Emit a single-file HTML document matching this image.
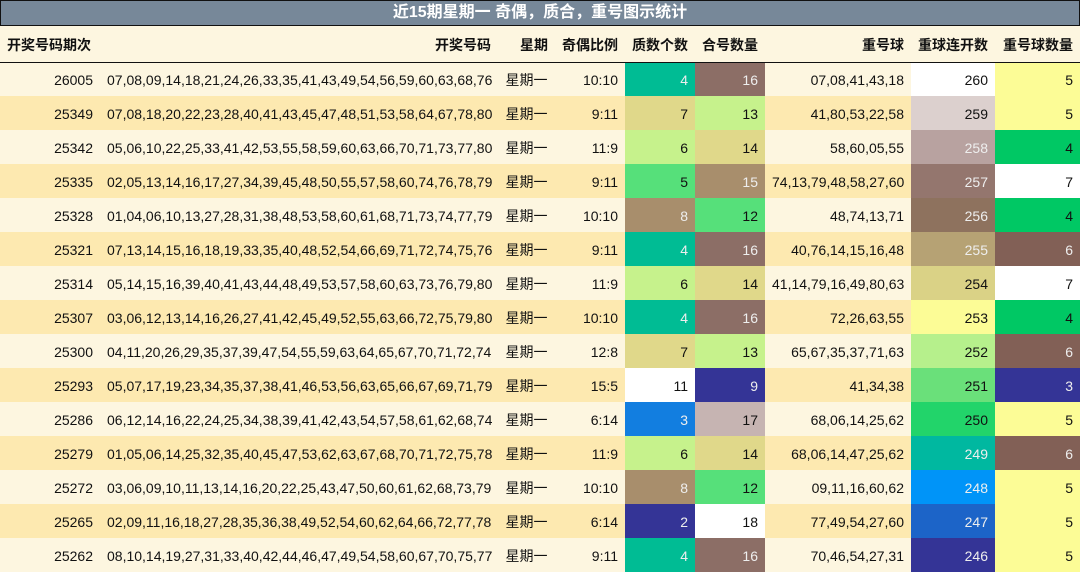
<!DOCTYPE html>
<html><head><meta charset="utf-8"><style>
*{margin:0;padding:0;box-sizing:border-box}
body{width:1080px;height:573px;overflow:hidden;background:#fff;font-family:"Liberation Sans","Noto Sans CJK SC",sans-serif;font-size:14px;color:#111}
.title{position:absolute;left:0;top:0;width:1080px;height:26px;background:#778899;border:1px solid #111;color:#fff;font-weight:bold;font-size:16px;text-align:center;line-height:24px}
table{position:absolute;left:0;top:26px;border-collapse:collapse;table-layout:fixed;width:1080px}
td,th{height:34px;padding:2px 7px 0;text-align:right;white-space:nowrap;overflow:hidden}
th{height:36px;font-weight:bold;background:#fdf6e0;border-bottom:1px solid #111}
th.l{text-align:left}
tr.a td{background:#fdf6e0}
tr.b td{background:#fde9b0}
td.c{text-align:center}
.w{color:#eee}
</style></head><body>
<div class="title">近15期星期一 奇偶，质合，重号图示统计</div>
<table>
<colgroup><col style="width:100px"><col style="width:398px"><col style="width:57px"><col style="width:70px"><col style="width:70px"><col style="width:70px"><col style="width:146px"><col style="width:84px"><col style="width:85px"></colgroup>
<tr><th class="l">开奖号码期次</th><th>开奖号码</th><th>星期</th><th>奇偶比例</th><th>质数个数</th><th>合号数量</th><th>重号球</th><th>重球连开数</th><th>重号球数量</th></tr>
<tr class="a"><td>26005</td><td>07,08,09,14,18,21,24,26,33,35,41,43,49,54,56,59,60,63,68,76</td><td class="c">星期一</td><td>10:10</td><td class="w" style="background:#00bc94">4</td><td class="w" style="background:#8c6e66">16</td><td>07,08,41,43,18</td><td style="background:#fff">260</td><td style="background:#fcfc96">5</td></tr>
<tr class="b"><td>25349</td><td>07,08,18,20,22,23,28,40,41,43,45,47,48,51,53,58,64,67,78,80</td><td class="c">星期一</td><td>9:11</td><td style="background:#e0d88a">7</td><td style="background:#c6f28c">13</td><td>41,80,53,22,58</td><td style="background:#dcd0ce">259</td><td style="background:#fcfc96">5</td></tr>
<tr class="a"><td>25342</td><td>05,06,10,22,25,33,41,42,53,55,58,59,60,63,66,70,71,73,77,80</td><td class="c">星期一</td><td>11:9</td><td style="background:#c6f28c">6</td><td style="background:#e0d88a">14</td><td>58,60,05,55</td><td class="w" style="background:#b8a2a0">258</td><td style="background:#00c864">4</td></tr>
<tr class="b"><td>25335</td><td>02,05,13,14,16,17,27,34,39,45,48,50,55,57,58,60,74,76,78,79</td><td class="c">星期一</td><td>9:11</td><td style="background:#56e07a">5</td><td class="w" style="background:#a88e6c">15</td><td>74,13,79,48,58,27,60</td><td class="w" style="background:#94766e">257</td><td style="background:#fff">7</td></tr>
<tr class="a"><td>25328</td><td>01,04,06,10,13,27,28,31,38,48,53,58,60,61,68,71,73,74,77,79</td><td class="c">星期一</td><td>10:10</td><td class="w" style="background:#a88e6c">8</td><td style="background:#56e07a">12</td><td>48,74,13,71</td><td class="w" style="background:#8e725e">256</td><td style="background:#00c864">4</td></tr>
<tr class="b"><td>25321</td><td>07,13,14,15,16,18,19,33,35,40,48,52,54,66,69,71,72,74,75,76</td><td class="c">星期一</td><td>9:11</td><td class="w" style="background:#00bc94">4</td><td class="w" style="background:#8c6e66">16</td><td>40,76,14,15,16,48</td><td class="w" style="background:#b6a274">255</td><td class="w" style="background:#826056">6</td></tr>
<tr class="a"><td>25314</td><td>05,14,15,16,39,40,41,43,44,48,49,53,57,58,60,63,73,76,79,80</td><td class="c">星期一</td><td>11:9</td><td style="background:#c6f28c">6</td><td style="background:#e0d88a">14</td><td>41,14,79,16,49,80,63</td><td style="background:#dad286">254</td><td style="background:#fff">7</td></tr>
<tr class="b"><td>25307</td><td>03,06,12,13,14,16,26,27,41,42,45,49,52,55,63,66,72,75,79,80</td><td class="c">星期一</td><td>10:10</td><td class="w" style="background:#00bc94">4</td><td class="w" style="background:#8c6e66">16</td><td>72,26,63,55</td><td style="background:#fcfc96">253</td><td style="background:#00c864">4</td></tr>
<tr class="a"><td>25300</td><td>04,11,20,26,29,35,37,39,47,54,55,59,63,64,65,67,70,71,72,74</td><td class="c">星期一</td><td>12:8</td><td style="background:#e0d88a">7</td><td style="background:#c6f28c">13</td><td>65,67,35,37,71,63</td><td style="background:#b6f08c">252</td><td class="w" style="background:#826056">6</td></tr>
<tr class="b"><td>25293</td><td>05,07,17,19,23,34,35,37,38,41,46,53,56,63,65,66,67,69,71,79</td><td class="c">星期一</td><td>15:5</td><td style="background:#fff">11</td><td class="w" style="background:#343496">9</td><td>41,34,38</td><td style="background:#6ae07a">251</td><td class="w" style="background:#343496">3</td></tr>
<tr class="a"><td>25286</td><td>06,12,14,16,22,24,25,34,38,39,41,42,43,54,57,58,61,62,68,74</td><td class="c">星期一</td><td>6:14</td><td class="w" style="background:#127ee0">3</td><td style="background:#c6b4b2">17</td><td>68,06,14,25,62</td><td style="background:#22d46a">250</td><td style="background:#fcfc96">5</td></tr>
<tr class="b"><td>25279</td><td>01,05,06,14,25,32,35,40,45,47,53,62,63,67,68,70,71,72,75,78</td><td class="c">星期一</td><td>11:9</td><td style="background:#c6f28c">6</td><td style="background:#e0d88a">14</td><td>68,06,14,47,25,62</td><td class="w" style="background:#00b8a0">249</td><td class="w" style="background:#826056">6</td></tr>
<tr class="a"><td>25272</td><td>03,06,09,10,11,13,14,16,20,22,25,43,47,50,60,61,62,68,73,79</td><td class="c">星期一</td><td>10:10</td><td class="w" style="background:#a88e6c">8</td><td style="background:#56e07a">12</td><td>09,11,16,60,62</td><td class="w" style="background:#0094f8">248</td><td style="background:#fcfc96">5</td></tr>
<tr class="b"><td>25265</td><td>02,09,11,16,18,27,28,35,36,38,49,52,54,60,62,64,66,72,77,78</td><td class="c">星期一</td><td>6:14</td><td class="w" style="background:#343496">2</td><td style="background:#fff">18</td><td>77,49,54,27,60</td><td class="w" style="background:#1c64c8">247</td><td style="background:#fcfc96">5</td></tr>
<tr class="a"><td>25262</td><td>08,10,14,19,27,31,33,40,42,44,46,47,49,54,58,60,67,70,75,77</td><td class="c">星期一</td><td>9:11</td><td class="w" style="background:#00bc94">4</td><td class="w" style="background:#8c6e66">16</td><td>70,46,54,27,31</td><td class="w" style="background:#343496">246</td><td style="background:#fcfc96">5</td></tr>
</table>
</body></html>
